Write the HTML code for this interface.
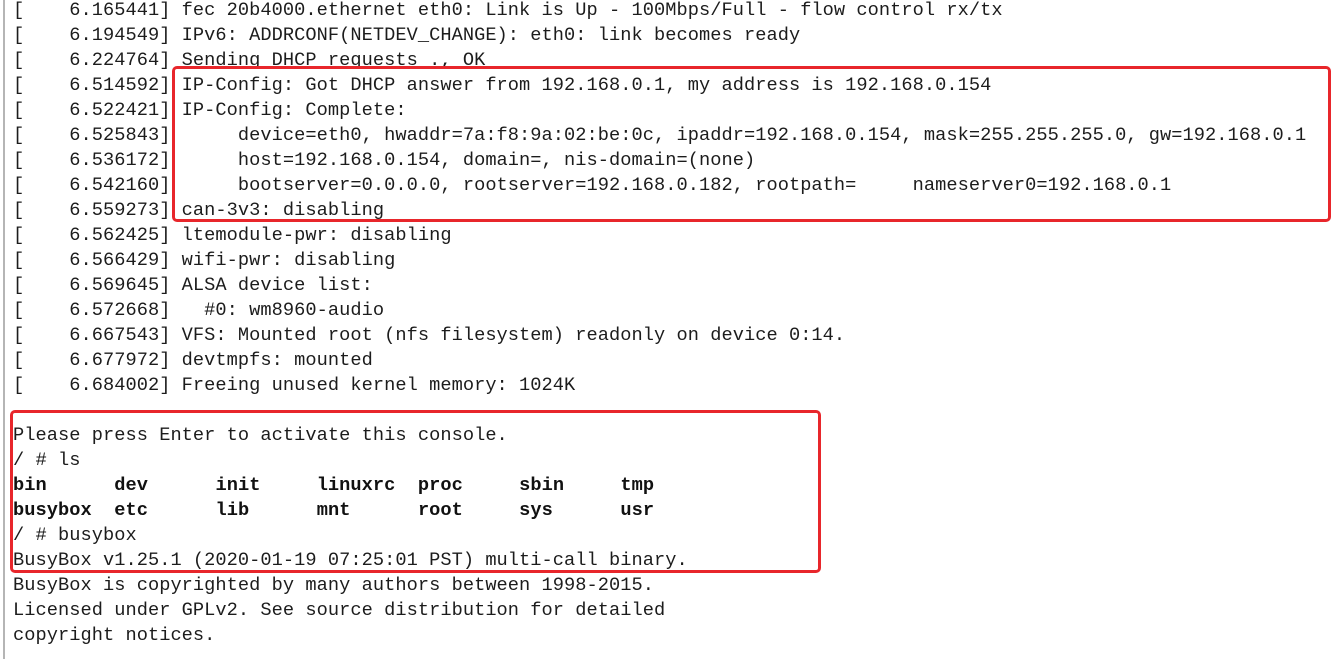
<!DOCTYPE html>
<html><head><meta charset="utf-8"><style>
html,body{margin:0;padding:0;background:#fff;width:1332px;height:659px;overflow:hidden;position:relative}
.bar{position:absolute;left:3px;top:0;width:2px;height:659px;background:#b5b5b5}
pre{position:absolute;left:13px;top:-2px;margin:0;font-family:"Liberation Mono",monospace;font-size:18.67px;letter-spacing:0.05px;line-height:25px;color:#1c1c1c}
b{font-weight:bold;color:#111}
.box{position:absolute;border:3px solid #e8262b;border-radius:5px;box-sizing:border-box}
</style></head><body>
<div class="bar"></div>
<pre>[    6.165441] fec 20b4000.ethernet eth0: Link is Up - 100Mbps/Full - flow control rx/tx
[    6.194549] IPv6: ADDRCONF(NETDEV_CHANGE): eth0: link becomes ready
[    6.224764] Sending DHCP requests ., OK
[    6.514592] IP-Config: Got DHCP answer from 192.168.0.1, my address is 192.168.0.154
[    6.522421] IP-Config: Complete:
[    6.525843]      device=eth0, hwaddr=7a:f8:9a:02:be:0c, ipaddr=192.168.0.154, mask=255.255.255.0, gw=192.168.0.1
[    6.536172]      host=192.168.0.154, domain=, nis-domain=(none)
[    6.542160]      bootserver=0.0.0.0, rootserver=192.168.0.182, rootpath=     nameserver0=192.168.0.1
[    6.559273] can-3v3: disabling
[    6.562425] ltemodule-pwr: disabling
[    6.566429] wifi-pwr: disabling
[    6.569645] ALSA device list:
[    6.572668]   #0: wm8960-audio
[    6.667543] VFS: Mounted root (nfs filesystem) readonly on device 0:14.
[    6.677972] devtmpfs: mounted
[    6.684002] Freeing unused kernel memory: 1024K

Please press Enter to activate this console.
/ # ls
<b>bin</b>      <b>dev</b>      <b>init</b>     <b>linuxrc</b>  <b>proc</b>     <b>sbin</b>     <b>tmp</b>
<b>busybox</b>  <b>etc</b>      <b>lib</b>      <b>mnt</b>      <b>root</b>     <b>sys</b>      <b>usr</b>
/ # busybox
BusyBox v1.25.1 (2020-01-19 07:25:01 PST) multi-call binary.
BusyBox is copyrighted by many authors between 1998-2015.
Licensed under GPLv2. See source distribution for detailed
copyright notices.</pre>
<div class="box" style="left:172px;top:66px;width:1159px;height:156px"></div>
<div class="box" style="left:10px;top:410px;width:811px;height:163px"></div>
</body></html>
